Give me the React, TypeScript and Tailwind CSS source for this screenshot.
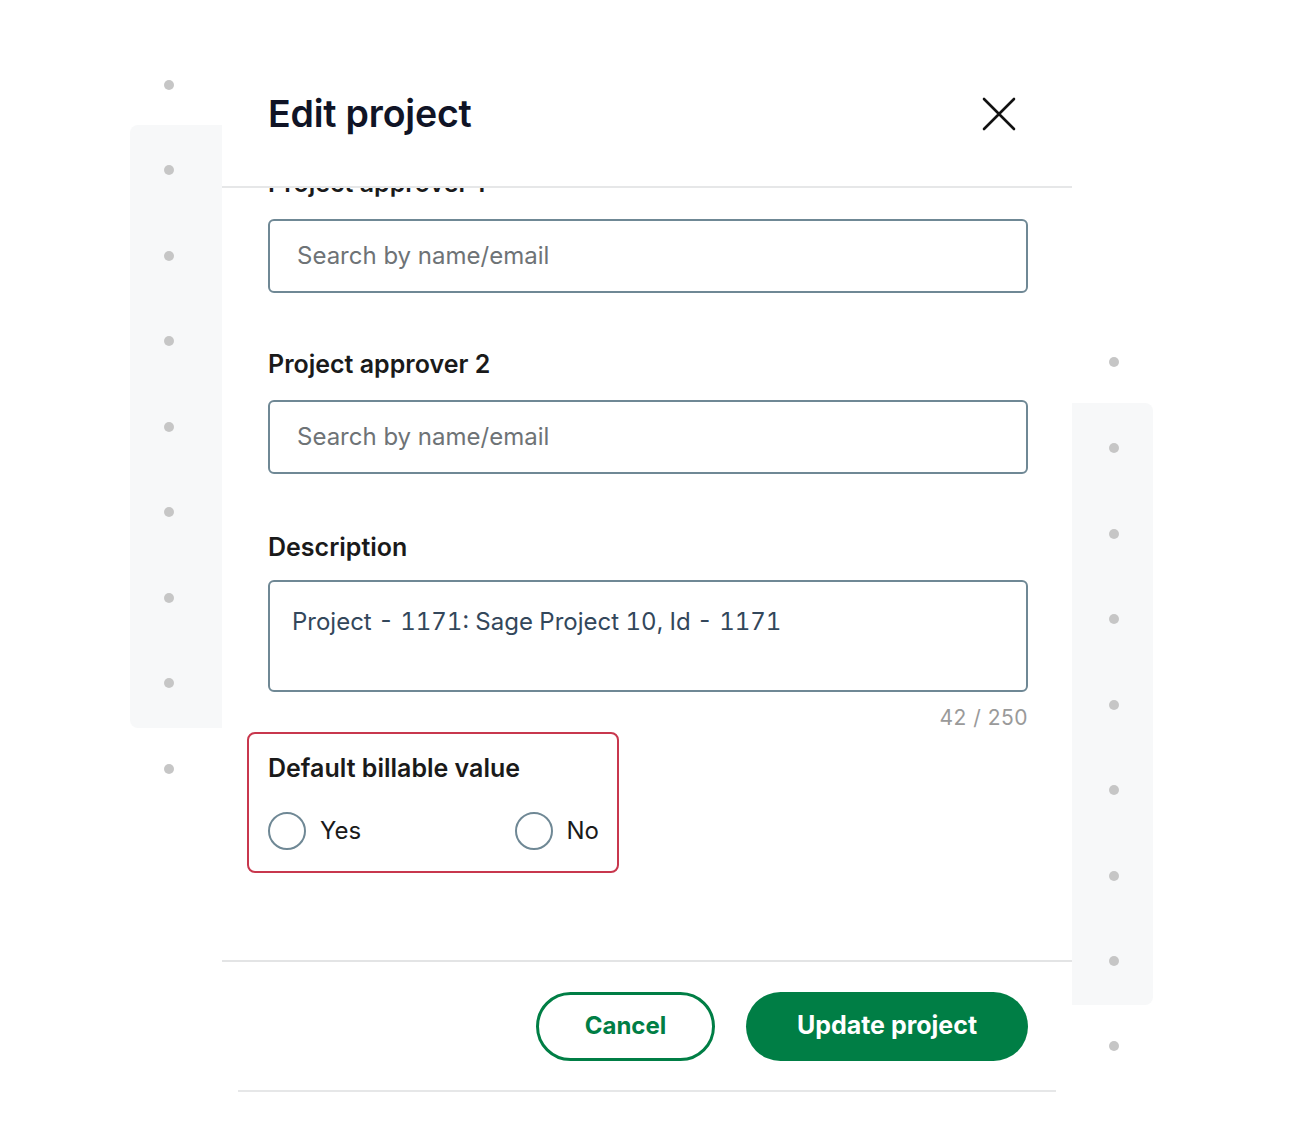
import React from "react";

const Dot = () => <div className="w-[10px] h-[10px] rounded-full bg-[#c6c6c6]" />;

function LeftRail() {
  return (
    <div className="w-[222px] shrink-0 flex flex-col pl-[130px]">
      <div className="mt-[80px] pl-[34px]">
        <Dot />
      </div>
      <div className="mt-[35px] bg-[#f7f8f9] rounded-l-[8px] w-[92px] pt-[40px] pb-[40px] pl-[34px] flex flex-col gap-[75.5px]">
        {Array.from({ length: 7 }).map((_, i) => (
          <Dot key={i} />
        ))}
      </div>
      <div className="mt-[36px] pl-[34px]">
        <Dot />
      </div>
    </div>
  );
}

function RightRail() {
  return (
    <div className="w-[81px] shrink-0 flex flex-col">
      <div className="mt-[357px] pl-[37px]">
        <Dot />
      </div>
      <div className="mt-[36px] bg-[#f7f8f9] rounded-r-[8px] w-[81px] pt-[40px] pb-[39px] pl-[37px] flex flex-col gap-[75.5px]">
        {Array.from({ length: 7 }).map((_, i) => (
          <Dot key={i} />
        ))}
      </div>
      <div className="mt-[36px] pl-[37px]">
        <Dot />
      </div>
    </div>
  );
}

function Radio({ label }: { label: string }) {
  return (
    <label className="flex items-center gap-[14px]">
      <span className="w-[38px] h-[38px] rounded-full border-2 border-[#6f8895] bg-white" />
      <span className="text-[24px] leading-[30px] text-[#1a1a1a]">{label}</span>
    </label>
  );
}

function Modal() {
  return (
    <div className="w-[850px] shrink-0 bg-white flex flex-col">
      <div className="mt-[42px] h-[146px] pl-[46px] pr-[45px] flex items-center justify-between border-b-2 border-[#e6e7e8]">
        <h1 className="text-[37.5px] leading-[44px] font-semibold text-[#101426] tracking-[-0.2px]">Edit project</h1>
        <button className="w-[40px] h-[40px] mr-[8px] flex items-center justify-center">
          <svg width="34" height="34" viewBox="0 0 34 34" fill="none">
            <path d="M2 2L32 32M32 2L2 32" stroke="#111111" strokeWidth="2.6" strokeLinecap="round" />
          </svg>
        </button>
      </div>
      <div className="h-[772px] overflow-hidden">
        <div className="-mt-[20px] pl-[46px] pr-[44px] flex flex-col">
          <div className="text-[25px] leading-[30px] font-semibold text-[#1a1a1a]">Project approver 1</div>
          <div className="mt-[21px] h-[74px] rounded-[6px] border-2 border-[#6f8895] flex items-center px-[27px] text-[24px] text-[#6e7376]">
            Search by name/email
          </div>
          <div className="mt-[56px] text-[25px] leading-[30px] font-semibold text-[#1a1a1a]">Project approver 2</div>
          <div className="mt-[21px] h-[74px] rounded-[6px] border-2 border-[#6f8895] flex items-center px-[27px] text-[24px] text-[#6e7376]">
            Search by name/email
          </div>
          <div className="mt-[58px] text-[25px] leading-[30px] font-semibold text-[#1a1a1a]">Description</div>
          <div className="mt-[18px] h-[112px] rounded-[6px] border-2 border-[#6f8895] px-[22px] pt-[25px] text-[24px] leading-[30px] text-[#33475b] tabular-nums">
            Project - 1171: Sage Project 10, Id - 1171
          </div>
          <div className="mt-[13px] text-right text-[21px] leading-[26px] text-[#9a9a9a] tracking-[0.5px]">42 / 250</div>
          <div className="mt-[1px] -ml-[21px] w-[372px] h-[141px] rounded-[8px] border-2 border-[#c8374d] pl-[19px] pr-[18px] pt-[19px]">
            <div className="text-[25px] leading-[30px] font-semibold text-[#1a1a1a]">Default billable value</div>
            <div className="mt-[29px] flex items-center justify-between">
              <Radio label="Yes" />
              <Radio label="No" />
            </div>
          </div>
        </div>
      </div>
      <div className="h-[130px] border-t-2 border-[#e3e4e5] flex items-center justify-end gap-[31px] pl-[45px] pr-[44px]">
        <button className="w-[179px] h-[69px] rounded-full border-[3px] border-[#007e45] text-[#007e45] text-[24px] font-bold">
          Cancel
        </button>
        <button className="w-[282px] h-[69px] rounded-full bg-[#007e45] text-white text-[25px] font-bold">
          Update project
        </button>
      </div>
      <div className="mx-[16px] h-[2px] bg-[#e6e7e8]" />
    </div>
  );
}

export default function App() {
  return (
    <div className="w-[1294px] h-[1132px] bg-white flex overflow-hidden" style={{ fontFamily: "Inter, 'Noto Sans', sans-serif" }}>
      <LeftRail />
      <Modal />
      <RightRail />
    </div>
  );
}
